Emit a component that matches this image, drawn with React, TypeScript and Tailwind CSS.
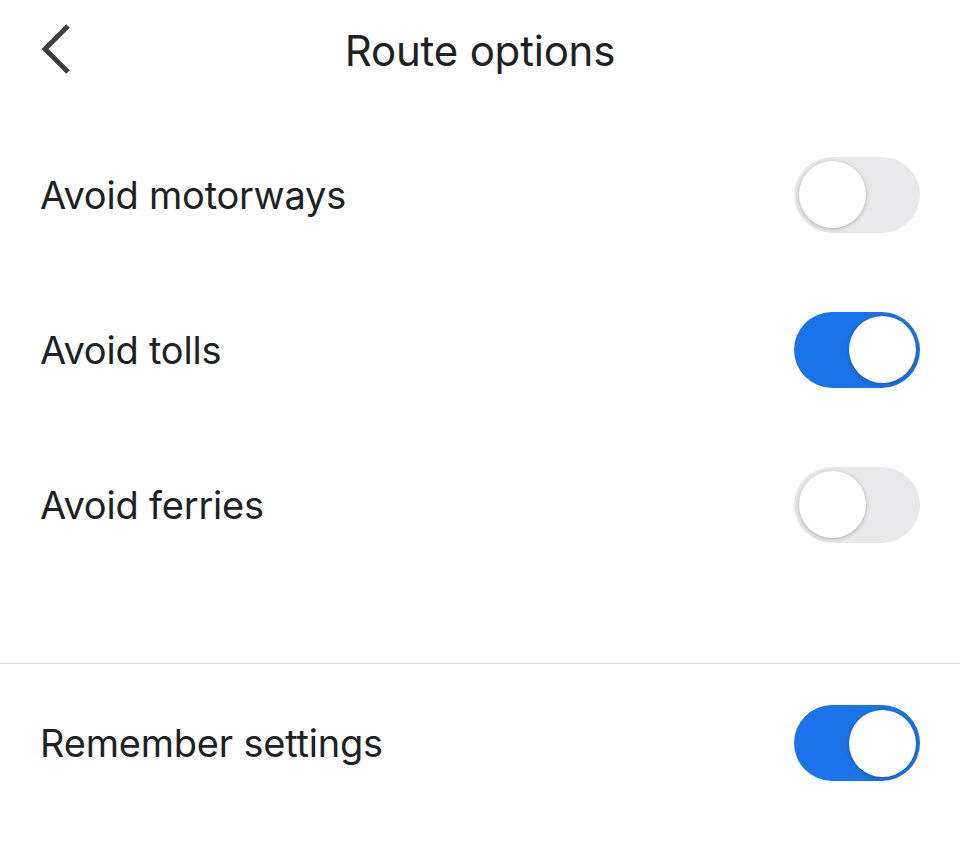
import { useState } from "react"

interface Option {
  id: string
  label: string
  on: boolean
}

function Toggle({ on, onClick }: { on: boolean; onClick: () => void }) {
  return (
    <button
      onClick={onClick}
      className={
        on
          ? "relative w-[126px] h-[76px] rounded-full bg-[#1a73e8] flex items-center justify-end pr-[4px]"
          : "relative w-[126px] h-[76px] rounded-full bg-[#e9e9eb] flex items-center justify-start pl-[5px]"
      }
    >
      <span className="block w-[67px] h-[67px] rounded-full bg-white shadow-[0_1px_4px_rgba(0,0,0,0.25)]" />
    </button>
  )
}

export default function App() {
  const [options, setOptions] = useState<Option[]>([
    { id: "motorways", label: "Avoid motorways", on: false },
    { id: "tolls", label: "Avoid tolls", on: true },
    { id: "ferries", label: "Avoid ferries", on: false },
  ])
  const [remember, setRemember] = useState(true)

  const toggle = (id: string) =>
    setOptions((prev) => prev.map((o) => (o.id === id ? { ...o, on: !o.on } : o)))

  return (
    <div className="w-[960px] h-[849px] bg-white text-[#202124] font-['Inter',sans-serif] overflow-hidden">
      <div className="relative h-[100px] flex items-center justify-center">
        <button className="absolute left-[35px] top-[21px] w-[40px] h-[56px] flex items-center justify-center">
          <svg width="34" height="52" viewBox="0 0 34 52" fill="none">
            <path d="M30 3 L7 26 L30 49" stroke="#3c4043" strokeWidth="5" strokeLinecap="butt" strokeLinejoin="miter" />
          </svg>
        </button>
        <h1 className="text-[42px] font-normal tracking-[-0.2px]">Route options</h1>
      </div>

      <div className="mt-[17px]">
        {options.map((o) => (
          <div key={o.id} className="h-[155px] flex items-center justify-between pl-[40px] pr-[40px]">
            <span className="text-[38px] tracking-[-0.2px] translate-y-[1px]">{o.label}</span>
            <Toggle on={o.on} onClick={() => toggle(o.id)} />
          </div>
        ))}
      </div>

      <div className="mt-[81px] border-t-[1.5px] border-[#e0e0e0]" />

      <div className="h-[158px] flex items-center justify-between pl-[40px] pr-[40px]">
        <span className="text-[38px] tracking-[-0.2px]">Remember settings</span>
        <Toggle on={remember} onClick={() => setRemember(!remember)} />
      </div>
    </div>
  )
}
